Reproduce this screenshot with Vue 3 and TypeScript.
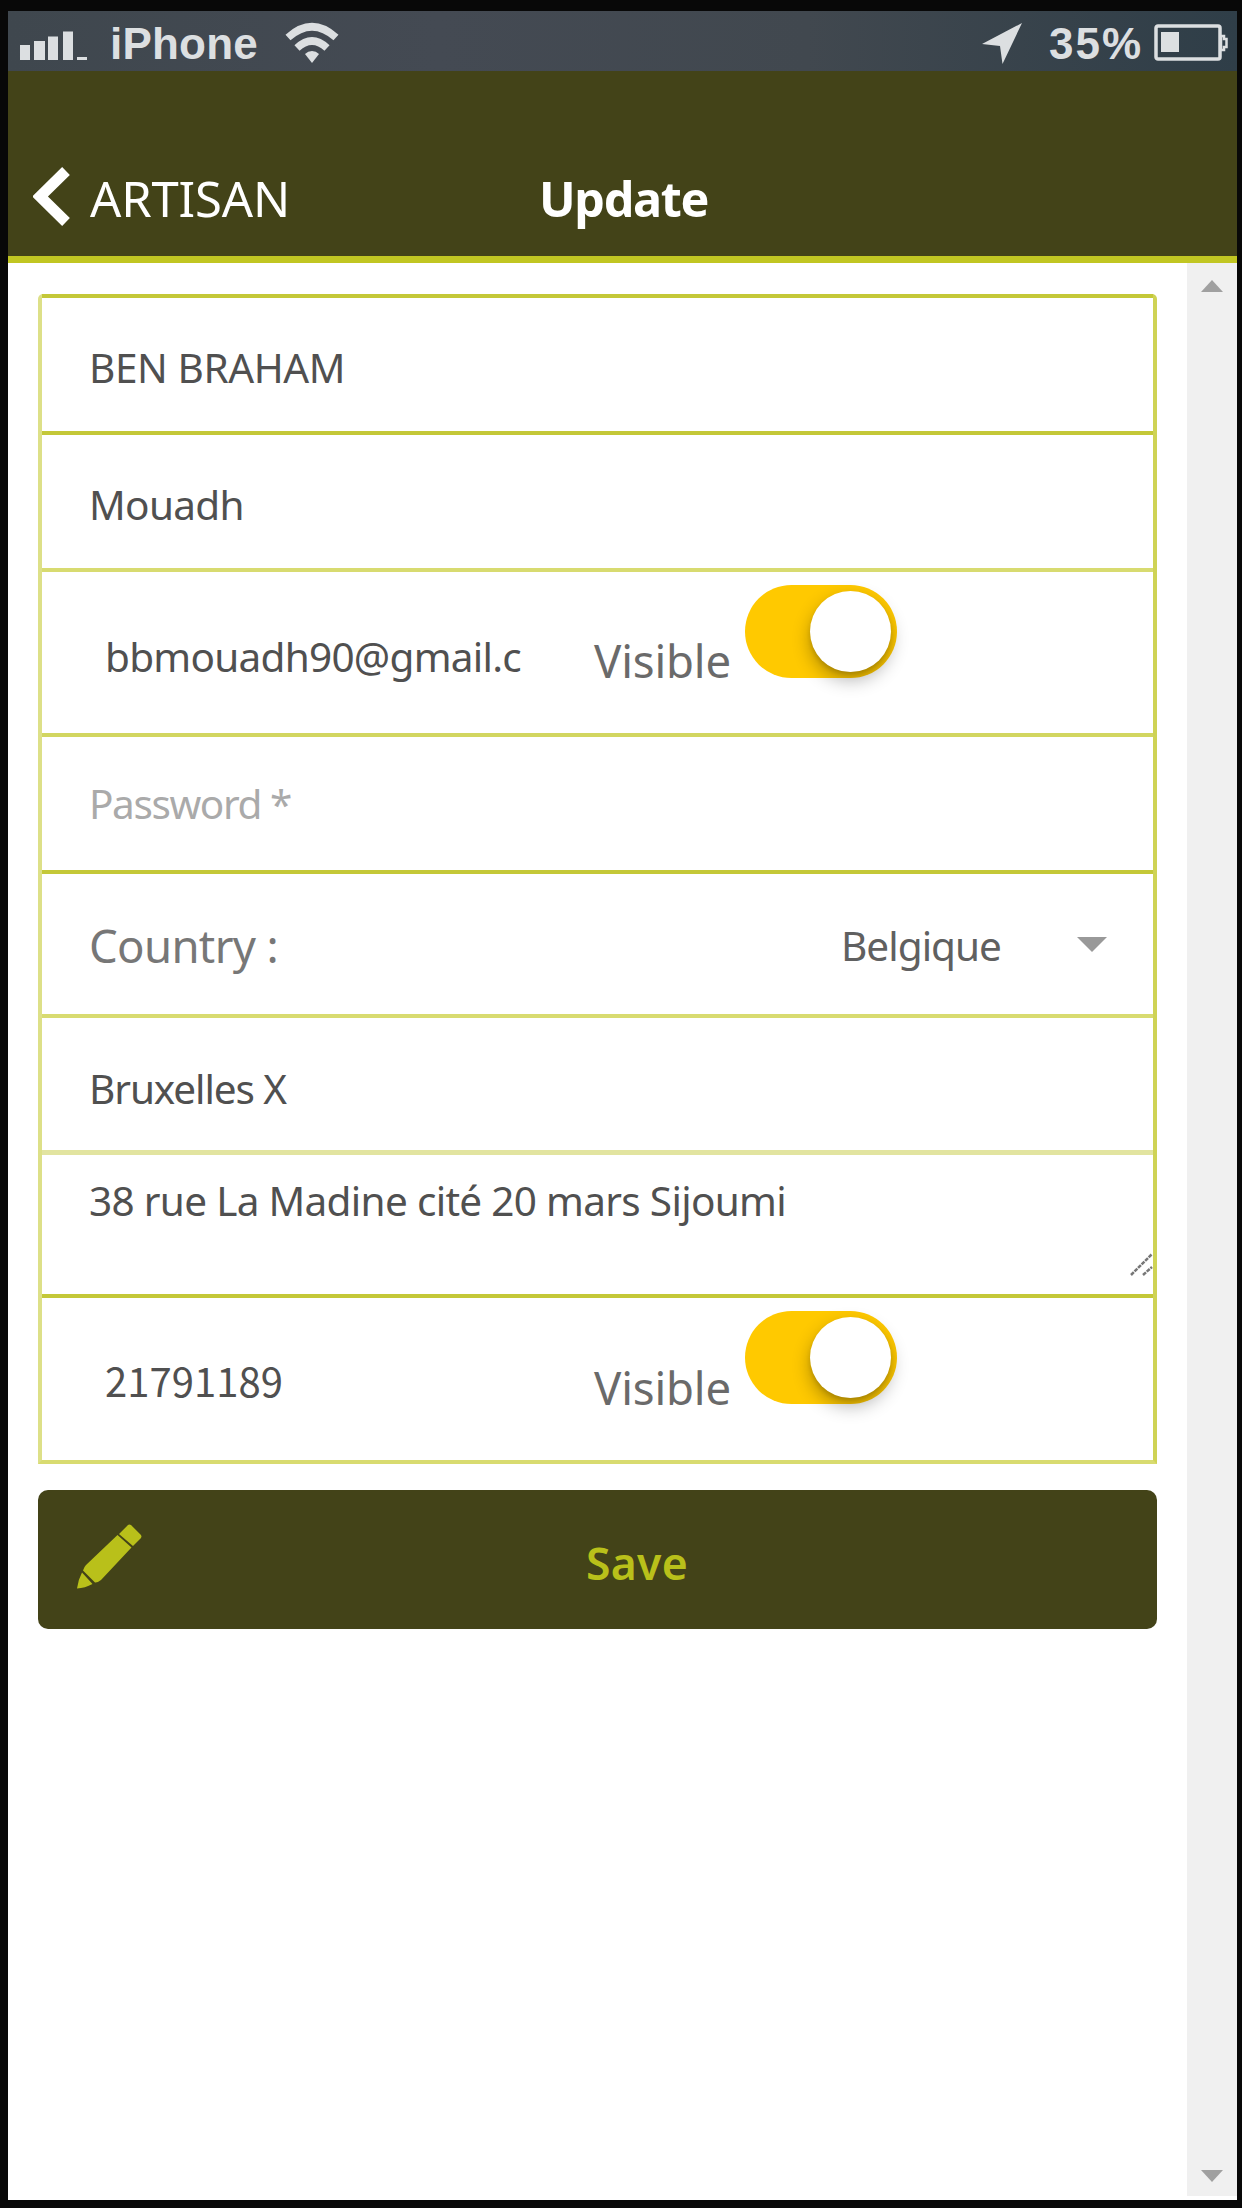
<script setup lang="ts">
import type { Directive } from 'vue'

// Spreads or tightens a label's letters so that it takes the given width.
const vFit: Directive<HTMLElement, number> = {
  mounted(el, binding) {
    const count = (el.textContent ?? '').length
    const natural = el.getBoundingClientRect().width
    el.style.letterSpacing = `${(binding.value - natural) / count}px`
  },
}
</script>

<template>
  <div class="device">
    <div class="status">
      <svg class="signal" width="72" height="34" viewBox="0 0 72 34">
        <path d="M2 15h10v15H2zM16 11h11v19H16zM30 6.500h10v23.500H30zM45 1.500h10v28.500H45zM59 27h10v3H59z" />
      </svg>
      <span v-fit="148" class="carrier">iPhone</span>
      <svg class="wifi" width="54" height="42" viewBox="0 0 54 42">
        <path d="M3 15.500Q27-6 51 15.500M12 26Q27 12 42 26" fill="none" stroke="currentColor" stroke-width="7.500" />
        <path d="M27 29q4 0 7 3l-7 9-7-9q3-3 7-3z" />
      </svg>
      <svg class="locate" width="42" height="42" viewBox="0 0 42 42">
        <path d="M40 0 20.500 41 18 23 0 21z" />
      </svg>
      <span v-fit="94" class="percent">35%</span>
      <svg class="battery" width="74" height="38" viewBox="0 0 74 38">
        <rect x="2" y="2" width="64" height="33" rx="2" fill="none" stroke="currentColor" stroke-width="3.500" />
        <path d="M7 8h18v20H7z" />
        <path d="M67 12h3v3h2.500v8h-2.500v3h-3z" fill="none" stroke="currentColor" stroke-width="2.500" />
      </svg>
    </div>

    <header class="header">
      <svg class="back" width="38" height="62" viewBox="0 0 38 62">
        <path d="M33 5 7 30.500 33 56" fill="none" stroke="#fff" stroke-width="11" />
      </svg>
      <span v-fit="200" class="crumb">ARTISAN</span>
      <span v-fit="169" class="title">Update</span>
    </header>

    <div class="body">
      <main class="content">
        <div class="list">
          <div class="row name"><span v-fit="256">BEN BRAHAM</span></div>
          <div class="row name"><span v-fit="155">Mouadh</span></div>
          <div class="row pair soft email">
            <div class="value"><span v-fit="416">bbmouadh90@gmail.c</span></div>
            <span v-fit="137" class="visible">Visible</span>
            <div class="toggle"><i></i></div>
          </div>
          <div class="row name password"><span v-fit="202">Password *</span></div>
          <div class="row country">
            <span v-fit="189" class="label">Country :</span>
            <span v-fit="160" class="choice">Belgique</span>
            <svg width="30" height="15" viewBox="0 0 30 15"><path d="M0 0h30L15 15z" fill="#999" /></svg>
          </div>
          <div class="row city soft"><span v-fit="197">Bruxelles X</span></div>
          <div class="row address">
            <span v-fit="697">38 rue La Madine cité 20 mars Sijoumi</span>
            <svg class="grip" width="24" height="25" viewBox="0 0 24 25">
              <path d="M2 23 23 2M14 23l9-8" stroke="#777" stroke-width="2.500" stroke-dasharray="4 1" />
            </svg>
          </div>
          <div class="row pair phone">
            <div class="value"><span v-fit="178" class="digits">21791189</span></div>
            <span v-fit="137" class="visible">Visible</span>
            <div class="toggle"><i></i></div>
          </div>
        </div>

        <div class="save">
          <svg width="66" height="66" viewBox="0 0 66 66">
            <path d="M51 1Q52 0 54 1L64 11Q65 12.500 64 14L56 22 42 10zM40.500 11 54.500 23.500 24 56Q20 59 18 58.500L6 46.500Q7 43 9 41zM5 48.500 15.500 60Q8 64 0 64.500 1 56 5 48.500z" />
          </svg>
          <span v-fit="102">Save</span>
        </div>
      </main>
      <aside class="scroll">
        <svg width="22" height="12" viewBox="0 0 22 12"><path d="M11 0 22 12H0z" /></svg>
        <svg width="22" height="12" viewBox="0 0 22 12"><path d="M0 0h22L11 12z" /></svg>
      </aside>
    </div>
  </div>
</template>

<style>
body {
  margin: 0;
  background: #080808;
}
</style>

<style scoped>
.device {
  box-sizing: border-box;
  width: 1242px;
  height: 2208px;
  padding: 11px 5px 8px 8px;
  background: #080808;
  display: flex;
  flex-direction: column;
  font-family: "Noto Sans", "Open Sans", sans-serif;
  font-size: 40.5px;
  color: #505050;
  white-space: nowrap;
  overflow: hidden;
}
.device span {
  flex: none;
}
svg {
  display: block;
  flex: none;
  fill: currentColor;
}
.status {
  height: 60px;
  flex: none;
  display: flex;
  align-items: flex-start;
  color: #dcdfe1;
  background: linear-gradient(90deg, #3f474e, #444a53 35%, #41484f 65%, #2f3e48);
  font: bold 44px/60px "Liberation Sans", Arial, sans-serif;
}
.signal { margin: 19px 0 0 10px; }
.carrier { margin: 3px 0 0 20px; }
.wifi { margin: 11px 0 0 27px; }
.locate { margin: 12px 0 0 auto; }
.percent { margin: 3px 0 0 25px; }
.battery { margin: 13px 9px 0 11px; }
.header {
  height: 185px;
  flex: none;
  display: flex;
  align-items: flex-start;
  background: #434318;
  border-bottom: 7px solid #c1c622;
  color: #fff;
  line-height: 70px;
}
.back { margin: 95px 0 0 25px; }
.crumb { font-size: 49px; margin: 92px 0 0 19px; }
.title { font-size: 48.5px; font-weight: 700; margin: 92px 0 0 249px; }
.body {
  flex: 1;
  display: flex;
  background: #fff;
}
.content {
  width: 1119px;
  padding: 31px 30px 0;
}
.list {
  border: solid 4px;
  border-color: transparent #cfd355 #d8db70 #dde088;
  border-top: 0;
  border-radius: 5px 5px 0 0;
}
.row {
  box-sizing: border-box;
  height: 137px;
  border-top: 4px solid #c4c838;
  display: flex;
  align-items: center;
  padding-left: 47px;
}
.soft { border-top-color: #d8db70; }
.name { padding-top: 6px; }
.email { height: 165px; }
.pair { padding-left: 63px; }
.value {
  width: 489px;
  padding-top: 8px;
}
.visible {
  font-size: 45.5px;
  padding-top: 15px;
  color: #6a6a6a;
}
.toggle {
  box-sizing: border-box;
  width: 152px;
  height: 93px;
  margin: 13px 0 0 14px;
  padding: 6px 6px 0 0;
  align-self: flex-start;
  display: flex;
  justify-content: flex-end;
  border-radius: 47px;
  background: #ffc900;
}
.toggle i {
  width: 81px;
  height: 81px;
  border-radius: 50%;
  background: #fff;
  box-shadow: 0 8px 18px rgba(0, 0, 0, 0.3), 0 3px 4px rgba(0, 0, 0, 0.12);
}
.password {
  border-top-color: #d2d660;
  color: #aaa;
  padding-top: 0;
}
.country { height: 144px; }
.label {
  font-size: 45.5px;
  color: #777;
  padding-top: 2px;
}
.choice {
  margin-left: auto;
  padding-top: 3px;
  color: #606060;
}
.country svg { margin: 0 46px 0 76px; }
.city {
  height: 136px;
  padding-top: 8px;
}
.address {
  height: 144px;
  border-top: 5px solid #e2e4a0;
  align-items: flex-start;
  padding-top: 18px;
  line-height: 56px;
}
.grip { margin: 79px 0 0 auto; }
.phone { height: 166px; }
.phone .value { padding-top: 2px; }
.digits {
  font-family: "Noto Sans CJK SC", "Noto Sans", sans-serif;
  font-size: 40px;
}
.save {
  box-sizing: border-box;
  height: 139px;
  margin-top: 26px;
  border-radius: 10px;
  background: #434318;
  color: #b9c01a;
  font-size: 44.5px;
  font-weight: 600;
  display: flex;
  align-items: center;
}
.save svg { margin: 0 0 5px 39px; }
.save span { margin: 5px 0 0 443px; }
.scroll {
  width: 50px;
  height: 1933px;
  background: #f0f0f0;
  color: #a0a0a0;
  display: flex;
  flex-direction: column;
  align-items: center;
  justify-content: space-between;
  padding: 17px 0 14px;
  box-sizing: border-box;
}
</style>
